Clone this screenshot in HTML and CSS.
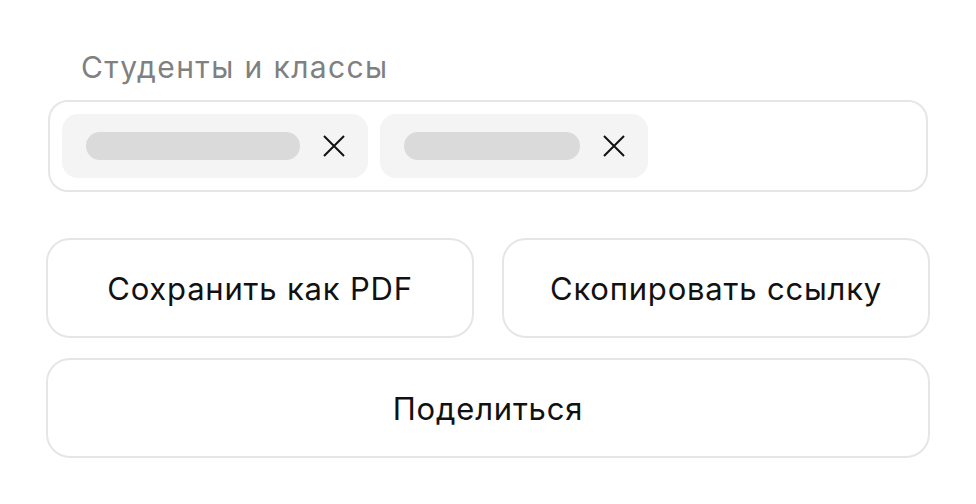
FILE: index.html
```html
<!DOCTYPE html>
<html lang="ru">
<head>
<meta charset="utf-8">
<link rel="stylesheet" href="styles.css">
</head>
<body>
<div class="page">
  <div class="field">
    <div class="label">Студенты и классы</div>
    <div class="input">
      <div class="chip">
        <span class="bar bar-long"></span>
        <svg class="x" viewBox="0 0 22 22" width="22" height="22"><path d="M1 1L21 21M21 1L1 21" stroke="#111" stroke-width="2" fill="none"/></svg>
      </div>
      <div class="chip">
        <span class="bar bar-short"></span>
        <svg class="x" viewBox="0 0 22 22" width="22" height="22"><path d="M1 1L21 21M21 1L1 21" stroke="#111" stroke-width="2" fill="none"/></svg>
      </div>
    </div>
  </div>
  <div class="actions">
    <button class="btn">Сохранить как PDF</button>
    <button class="btn">Скопировать ссылку</button>
    <button class="btn btn-wide">Поделиться</button>
  </div>
</div>
</body>
</html>
```
FILE: styles.css
```css
html, body {
  margin: 0;
  background: #ffffff;
}
.page {
  padding: 48px 46px 0 46px;
  font-family: "Inter", "Noto Sans", sans-serif;
}
.field {
  margin: 0 2px;
}
.label {
  font-size: 30px;
  line-height: 38px;
  letter-spacing: 1.4px;
  color: #808080;
  padding-left: 33px;
  margin-bottom: 14px;
}
.input {
  border: 2px solid #e6e6e6;
  border-radius: 20px;
  padding: 12px;
  display: flex;
  gap: 12px;
}
.chip {
  height: 64px;
  box-sizing: border-box;
  padding: 0 23px 0 24px;
  background: #f4f4f4;
  border-radius: 16px;
  display: flex;
  align-items: center;
  gap: 23px;
}
.bar {
  display: block;
  height: 28px;
  background: #dadada;
  border-radius: 14px;
}
.bar-long { width: 214px; }
.bar-short { width: 176px; }
.x { display: block; }
.actions {
  margin-top: 46px;
  display: grid;
  grid-template-columns: 1fr 1fr;
  gap: 20px 28px;
}
.btn {
  height: 100px;
  border: 2px solid #e6e6e6;
  border-radius: 24px;
  background: #fff;
  font-family: "Inter", "Noto Sans", sans-serif;
  font-size: 31px;
  letter-spacing: 0.8px;
  color: #111;
  padding: 0;
}
.btn-wide {
  grid-column: 1 / 3;
}
```
